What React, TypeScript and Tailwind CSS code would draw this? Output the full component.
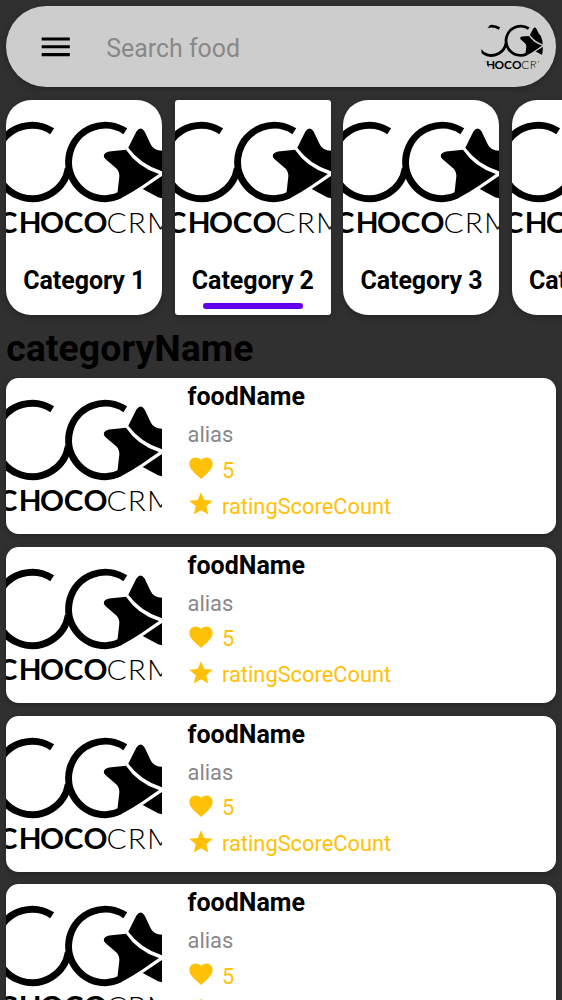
import React from "react";

const categories = ["Category 1", "Category 2", "Category 3", "Category 4"];
const foods = [1, 2, 3, 4];

function Logo({ className }: { className: string }) {
  return (
    <svg viewBox="0 0 156 156" className={className} aria-label="ChocoCRM">
      <g fill="none" stroke="#000" strokeWidth="7">
        <path d="M46.2 31.2A36.7 36.7 0 1 0 62.4 68" />
        <path d="M119.3 31.2A36.7 36.7 0 1 0 99.3 98.7Q107 98.7 114 95" />
      </g>
      <path d="M122.3 47.8L130.4 31.6Q134.7 25.6 138.6 31.6L144.7 44.3Q147.7 50.7 156 50.7V71.3Q134.5 64.5 122.3 47.8Z" />
      <path d="M120 49.7L103 51.4Q94.8 53.6 99.4 59L110.7 68.7Q113.6 72 113.3 77L111.3 94.3V99.4L116 97.8Q126 92.5 136 85.8L152.9 74Q131.5 67 120 49.7Z" />
      <path d="M136.7 88.9L156 76V98.2L152 97.2Z" />
      <g fontFamily="Lato, sans-serif" fontSize="28" transform="scale(1.06 1)">
        <text y="133.2" x="-7.9 12 32.1 54.4 73" fontWeight="700">CHOCO</text>
        <text y="133.2" x="94.7 114.8 133" fontWeight="300">CRM</text>
      </g>
    </svg>
  );
}

function Header() {
  return (
    <header className="flex h-[81px] shrink-0 items-center rounded-full bg-[#cdcdcd] pr-[12.5px] pl-[31px] shadow-[0_2px_6px_rgba(0,0,0,0.25)]">
      <svg viewBox="0 0 24 24" className="size-[37.5px]">
        <path d="M3 18h18v-2H3v2zm0-5h18v-2H3v2zm0-7v2h18V6H3z" />
      </svg>
      <span className="ml-[31.5px] flex-1 pt-[3px] text-[24.9px] leading-[29px] text-[#888888]">Search food</span>
      <Logo className="size-[62.4px] rounded-full" />
    </header>
  );
}

function CategoryCard({ name, selected }: { name: string; selected: boolean }) {
  return (
    <div
      className={`flex h-[215px] w-[156px] shrink-0 flex-col items-center overflow-hidden bg-white shadow-[0_2px_6px_rgba(0,0,0,0.25)] ${
        selected ? "rounded-[3px]" : "rounded-[25px]"
      }`}
    >
      <Logo className="size-[156px] shrink-0" />
      <span className="mt-[10px] text-[25px] leading-[29px] font-bold tracking-[-0.05px] whitespace-nowrap">{name}</span>
      {selected && <div className="mt-[7.5px] h-[6.25px] w-[100px] shrink-0 rounded-full bg-[#6200ee]" />}
    </div>
  );
}

function FoodCard() {
  return (
    <article className="flex h-[156.25px] shrink-0 overflow-hidden rounded-[12.5px] bg-white shadow-[0_2px_6px_rgba(0,0,0,0.25)]">
      <Logo className="size-[156px] shrink-0" />
      <div className="ml-[25.25px] flex flex-col pt-1">
        <h2 className="text-[25px] leading-[29px] font-bold">foodName</h2>
        <p className="mt-[11px] text-[21.9px] leading-[26px] text-[#888888]">alias</p>
        <div className="mt-[6px] -ml-[0.5px] flex h-[28px] items-center gap-[7px] text-[#ffc107]">
          <svg viewBox="0 0 24 24" fill="currentColor" className="size-[28px]">
            <path d="M12 21.35l-1.45-1.32C5.4 15.36 2 12.28 2 8.5 2 5.42 4.42 3 7.5 3c1.74 0 3.41.81 4.5 2.09C13.09 3.81 14.76 3 16.5 3 19.58 3 22 5.42 22 8.5c0 3.78-3.4 6.86-8.55 11.54L12 21.35z" />
          </svg>
          <span className="pt-[5px] text-[21.9px] leading-[26px]">5</span>
        </div>
        <div className="mt-[8px] -ml-[0.5px] flex h-[28px] items-center gap-[7px] text-[#ffc107]">
          <svg viewBox="0 0 24 24" fill="currentColor" className="size-[28px]">
            <path d="M12 17.27L18.18 21l-1.64-7.03L22 9.24l-7.19-.61L12 2 9.19 8.63 2 9.24l5.46 4.73L5.82 21z" />
          </svg>
          <span className="pt-[5px] text-[21.85px] leading-[26px]">ratingScoreCount</span>
        </div>
      </div>
    </article>
  );
}

export default function App() {
  return (
    <main className="flex h-screen w-full flex-col overflow-hidden bg-[#303030] px-[6.25px] pt-[6.25px] font-['Roboto',sans-serif] text-black">
      <Header />
      <div className="mt-[12.75px] -mr-[6.25px] flex shrink-0 gap-[12.6px]">
        {categories.map((name, i) => (
          <CategoryCard key={name} name={name} selected={i === 1} />
        ))}
      </div>
      <h1 className="mt-[11px] shrink-0 text-[37.5px] leading-[44px] font-bold">categoryName</h1>
      <div className="mt-[8px] flex flex-col gap-[12.5px]">
        {foods.map((id) => (
          <FoodCard key={id} />
        ))}
      </div>
    </main>
  );
}
